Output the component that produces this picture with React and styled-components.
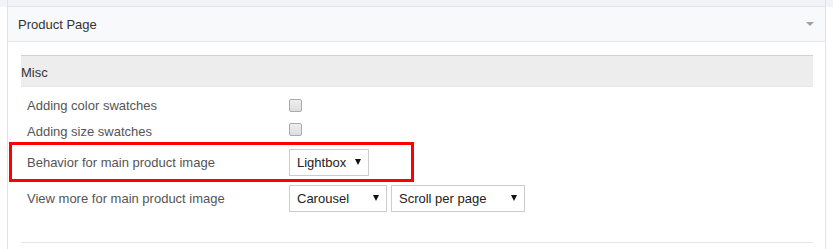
import React from "react";
import styled, { createGlobalStyle } from "styled-components";

const GlobalStyle = createGlobalStyle`
  html, body {
    margin: 0;
    padding: 0;
    background: #ffffff;
    font-family: "Liberation Sans", Arial, sans-serif;
    font-size: 13px;
  }
  *, *::before, *::after { box-sizing: border-box; }
`;

const Page = styled.div`
  width: 833px;
  height: 249px;
  overflow: hidden;
  padding-left: 7px;
  background: linear-gradient(#f1f3f6 0 7px, #ffffff 7px);
`;

const Panel = styled.div`
  width: 819px;
  height: 100%;
  border-left: 1px solid #dfe3e8;
  border-right: 1px solid #dfe3e8;
`;

const PrevStrip = styled.div`
  height: 7px;
  background: #f1f3f6;
  border-bottom: 1px solid #e1e5ea;
`;

const PanelHeader = styled.div`
  height: 35px;
  display: flex;
  align-items: center;
  justify-content: space-between;
  padding: 0 11px 0 10px;
  background: #f7f9fa;
  border-bottom: 1px solid #e2e6ea;
  color: #333;
  font-size: 13px;
`;

const Caret = styled.span`
  width: 0;
  height: 0;
  border-left: 4px solid transparent;
  border-right: 4px solid transparent;
  border-top: 4px solid #9aa3ad;
`;

const PanelBody = styled.div`
  padding: 13px 12px 0 13px;
`;

const GroupTitle = styled.div`
  height: 32px;
  display: flex;
  align-items: center;
  padding-top: 3px;
  background: #ededed;
  border-top: 1px solid #d2d2d2;
  border-bottom: 1px solid #e6e6e6;
  color: #333;
  font-size: 13px;
`;

const Rows = styled.div`
  padding-top: 5px;
  padding-bottom: 26px;
  border-bottom: 1px solid #e6e6e6;
`;

const Row = styled.div`
  position: relative;
  display: flex;
  align-items: ${({ $tall }) => ($tall ? "flex-start" : "center")};
  height: ${({ $tall }) => ($tall ? "36px" : "26px")};
  padding-left: 6px;
  padding-top: ${({ $tall }) => ($tall ? "5px" : "0")};
  color: #555;

  ${({ $highlight }) =>
    $highlight &&
    `
    &::after {
      content: "";
      position: absolute;
      left: -12px;
      top: -2px;
      width: 405px;
      height: 40px;
      border: 3px solid #ff0000;
      pointer-events: none;
    }
  `}
`;

const Label = styled.div`
  width: 262px;
  flex: none;
  line-height: ${({ $tall }) => ($tall ? "27px" : "normal")};
`;

const Controls = styled.div`
  display: flex;
  gap: 4px;
`;

const Checkbox = styled.span`
  display: block;
  width: 13px;
  height: 13px;
  border: 1px solid #aaaaaa;
  border-radius: 2px;
  background: linear-gradient(#efefef, #dddddd);
  margin-top: ${({ $up }) => ($up ? "-3px" : "0")};
`;

const Select = styled.div`
  width: ${({ $w }) => $w}px;
  height: 27px;
  display: flex;
  align-items: center;
  justify-content: space-between;
  padding: 0 7px;
  border: 1px solid #cccccc;
  background: #fff;
  color: #222;
  font-size: 13px;
`;

const Arrow = styled.span`
  width: 0;
  height: 0;
  margin-top: -2px;
  border-left: 3px solid transparent;
  border-right: 3px solid transparent;
  border-top: 6px solid #111;
`;

function Dropdown({ value, width }) {
  return (
    <Select $w={width}>
      <span>{value}</span>
      <Arrow />
    </Select>
  );
}

export default function App() {
  return (
    <>
      <GlobalStyle />
      <Page>
        <Panel>
          <PrevStrip />
          <PanelHeader>
            <span>Product Page</span>
            <Caret />
          </PanelHeader>
          <PanelBody>
            <GroupTitle>Misc</GroupTitle>
            <Rows>
              <Row>
                <Label>Adding color swatches</Label>
                <Checkbox />
              </Row>
              <Row>
                <Label>Adding size swatches</Label>
                <Checkbox $up />
              </Row>
              <Row $tall $highlight>
                <Label $tall>Behavior for main product image</Label>
                <Controls>
                  <Dropdown value="Lightbox" width={80} />
                </Controls>
              </Row>
              <Row $tall>
                <Label $tall>View more for main product image</Label>
                <Controls>
                  <Dropdown value="Carousel" width={98} />
                  <Dropdown value="Scroll per page" width={134} />
                </Controls>
              </Row>
            </Rows>
          </PanelBody>
        </Panel>
      </Page>
    </>
  );
}
